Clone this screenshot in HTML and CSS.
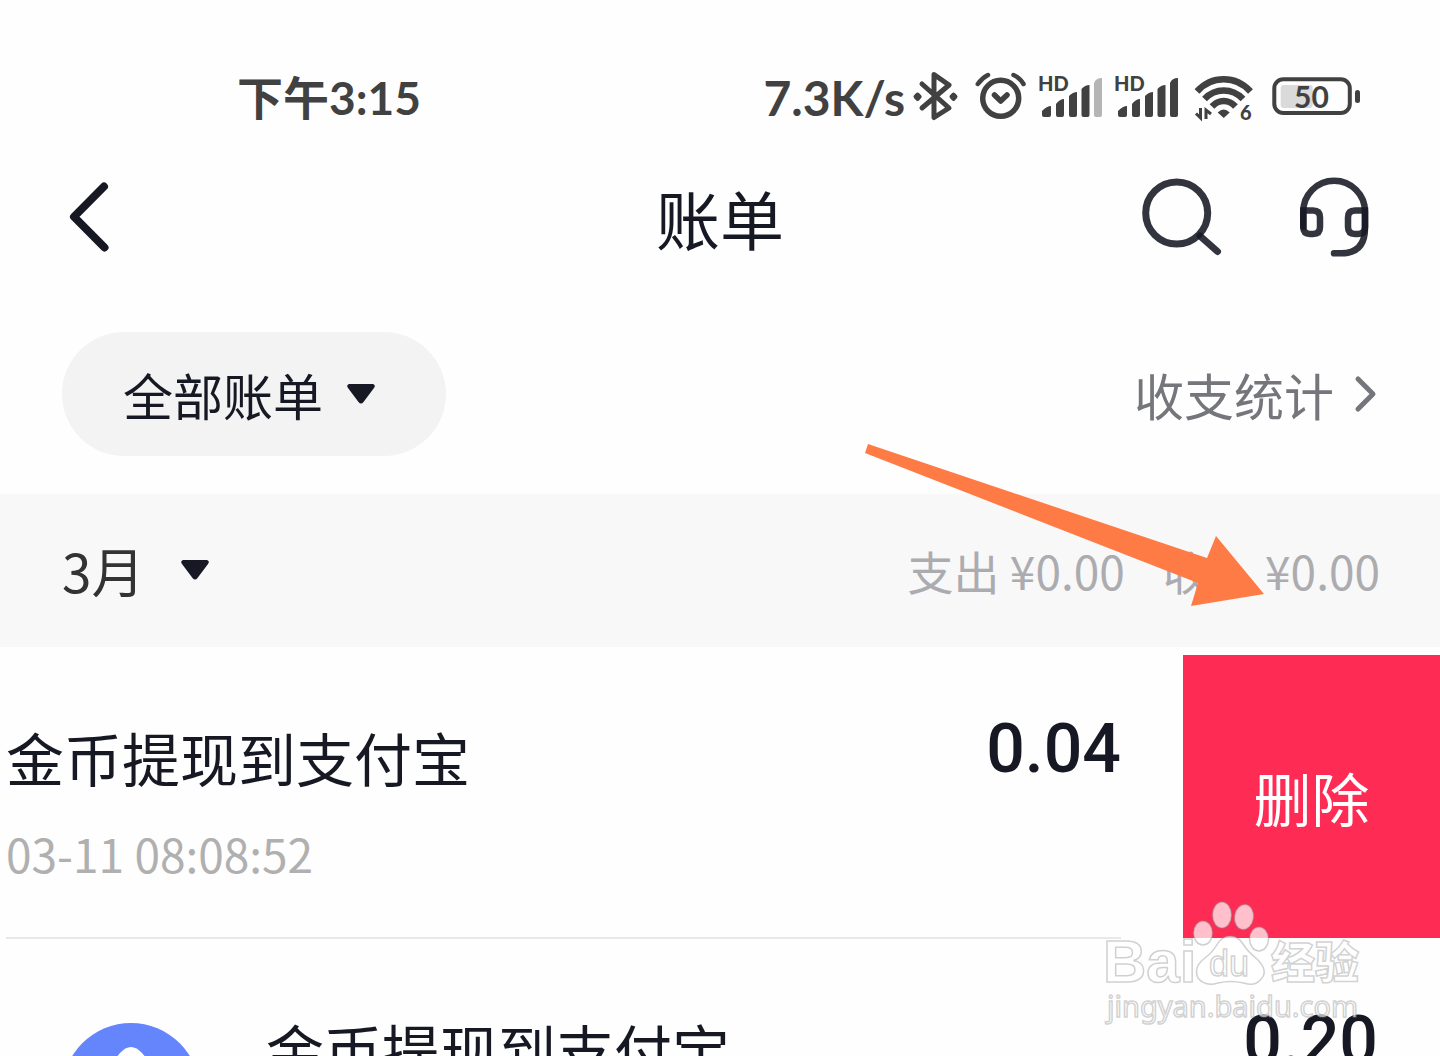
FILE: index.html
```html
<!DOCTYPE html>
<html lang="zh-CN">
<head>
    <meta charset="UTF-8">
    <meta name="viewport" content="width=device-width, initial-scale=1.0">
    <title>账单</title>
    <link rel="stylesheet" href="styles.css">
</head>
<body>
    <!-- phone status bar -->
    <div class="status-bar">
        <span class="status-time">下午3:15</span>
        <div class="status-right">
            <span class="speed">7.3K/s</span>
            <div class="status-icons">
                <svg width="49" height="48" viewBox="0 0 49 48" fill="none" stroke="#414141" stroke-width="5" stroke-linecap="round" stroke-linejoin="round">
                    <path d="M9 12L36 36L21 45.500V2.500L36 13L9 36"/>
                    <path d="M4.500 22.500L2.500 24.700L4.500 27L6.700 24.700ZM40.500 22.500L38.500 24.700L40.500 27L42.500 24.700Z" stroke-width="4" fill="#414141"/>
                </svg>
                <svg width="51" height="48" viewBox="0 0 51 48" fill="none" stroke="#414141" stroke-width="5.500" stroke-linecap="round" stroke-linejoin="round">
                    <circle cx="25.700" cy="26.300" r="18"/>
                    <path d="M19.500 23L25.700 29L32 23"/>
                    <path d="M2.800 12Q7 6 13 3M38.500 3Q45 6 48.500 12" stroke-width="4.500"/>
                </svg>
                <svg width="63" height="48" viewBox="0 0 63 48" fill="#414141">
                    <text x="-1" y="19" class="icon-text-small">HD</text>
                    <path d="M3 39Q8 34 12 34V43Q12 45 10 45H5Q3 45 3 43ZM17 32Q21 27 25 27V43Q25 45 23 45H19Q17 45 17 43ZM30 24Q34 20 38 20V43Q38 45 36 45H32Q30 45 30 43ZM42.500 17Q46 13 50.500 13V43Q50.500 45 48.500 45H44.500Q42.500 45 42.500 43Z"/>
                    <path d="M55 11Q57 6 63 6V43Q63 45 61 45H57Q55 45 55 43Z" fill="#b5b5b5"/>
                </svg>
                <svg width="67" height="48" viewBox="0 0 67 48" fill="#414141">
                    <text x="-1" y="19" class="icon-text-small">HD</text>
                    <path d="M3 39Q8 34 12 34V43Q12 45 10 45H5Q3 45 3 43ZM17 32Q21 27 25 27V43Q25 45 23 45H19Q17 45 17 43ZM30 24Q34 20 38 20V43Q38 45 36 45H32Q30 45 30 43ZM42.500 17Q46 13 50.500 13V43Q50.500 45 48.500 45H44.500Q42.500 45 42.500 43ZM55 11Q57 6 63 6V43Q63 45 61 45H57Q55 45 55 43Z"/>
                </svg>
                <svg width="64" height="48" viewBox="0 0 64 48" fill="none" stroke="#414141" stroke-width="6.500">
                    <path d="M2 19.500Q13 7.300 28.700 7.300T55.500 19.500"/>
                    <path d="M9.500 27Q17.500 18.500 28.700 18.500T48 27"/>
                    <path d="M17 34.500Q22 29 28.700 29T40.500 34.500"/>
                    <path d="M22.700 40.500Q28.700 34.500 34.700 40.500L28.700 46Z" fill="#414141" stroke="none"/>
                    <path d="M5.500 36V46L1 41.500M11 47V38L16 42" stroke-width="3"/>
                    <text x="45" y="48" class="icon-text-small" fill="#414141" stroke="none">6</text>
                </svg>
                <svg width="88" height="48" viewBox="0 0 88 48">
                    <rect x="8.700" y="13" width="32" height="23" rx="3" fill="#dadada"/>
                    <rect x="2.300" y="7.300" width="75.500" height="33.700" rx="9" fill="none" stroke="#414141" stroke-width="4"/>
                    <rect x="83" y="18" width="5" height="13" rx="2.500" fill="#414141"/>
                    <text x="22" y="36" class="icon-text" fill="#414141">50</text>
                </svg>
            </div>
        </div>
    </div>

    <header class="header">
        <button class="icon-btn" aria-label="返回">
            <svg width="44" height="80" viewBox="0 0 44 80" fill="none" stroke="#161823" stroke-width="8" stroke-linecap="round" stroke-linejoin="round">
                <path d="M36 9.500L6 39.800L36.500 70.500"/>
            </svg>
        </button>
        <h1>账单</h1>
        <div class="header-actions">
            <button class="icon-btn" aria-label="搜索">
                <svg width="80" height="80" viewBox="0 0 80 80" fill="none" stroke="#161823" stroke-opacity="0.88" stroke-width="7" stroke-linecap="round">
                    <circle cx="34.700" cy="36" r="31"/>
                    <path d="M58 59L75.500 74.500"/>
                </svg>
            </button>
            <button class="icon-btn" aria-label="客服">
                <svg width="72" height="80" viewBox="0 0 72 80" fill="none" stroke="#161823" stroke-opacity="0.88" stroke-width="6.500" stroke-linecap="round">
                    <path d="M3.300 50V34.500A30.800 30.800 0 0 1 65 34.500V51Q65 76.300 41 76.300H34"/>
                    <path d="M3.300 33.500H13Q20 33.500 20 40.500V50Q20 57 13 57H10Q3.300 57 3.300 50Z"/>
                    <path d="M65 33.500H55Q48 33.500 48 40.500V50Q48 57 55 57H58Q65 57 65 50Z"/>
                </svg>
            </button>
        </div>
    </header>

    <div class="filter-row">
        <div class="pill">
            <select class="bill-type" aria-label="账单类型">
                <option>全部账单</option>
            </select>
            <svg class="caret" width="28" height="20" viewBox="0 0 28 20"><path d="M2 0H26Q29 1 27 4L16.500 18Q14 21 11.500 18L1 4Q-1 1 2 0Z" fill="#161823"/></svg>
        </div>
        <a href="#" class="stats-link">收支统计
            <svg width="24" height="38" viewBox="0 0 24 38" fill="none" stroke="#75767b" stroke-width="5" stroke-linecap="round" stroke-linejoin="round"><path d="M4 4L19 19L4 34"/></svg>
        </a>
    </div>

    <div class="month-bar">
        <div class="month">
            <select class="month-select" aria-label="月份">
                <option>3月</option>
            </select>
            <svg class="caret" width="28" height="20" viewBox="0 0 28 20"><path d="M2 0H26Q29 1 27 4L16.500 18Q14 21 11.500 18L1 4Q-1 1 2 0Z" fill="#161823"/></svg>
        </div>
        <div class="totals">
            <span>支出 ¥0.00</span>
            <span>收入 ¥0.00</span>
        </div>
        <svg class="arrow" width="400" height="164" viewBox="0 0 400 164"><path d="M3 0L342 114L351 92L399 150L326 162L333 139L0 9Z" fill="#ff7b45"/></svg>
    </div>

    <main>
        <!-- row swiped to the left -->
        <div class="bill swiped">
            <div class="bill-body">
                <div class="bill-info">
                    <p class="bill-name">金币提现到支付宝</p>
                    <p class="bill-date">03-11 08:08:52</p>
                </div>
                <span class="amount">0.04</span>
            </div>
            <button class="delete-btn">删除</button>
        </div>
        <div class="bill">
            <svg class="bill-icon" width="138" height="138" viewBox="0 0 138 138">
                <circle cx="69" cy="69" r="69" fill="#6585fd"/>
                <path d="M58 30Q69 18 80 30L104 58V102H34V58Z" fill="#fff"/>
            </svg>
            <div class="bill-body">
                <div class="bill-info">
                    <p class="bill-name">金币提现到支付宝</p>
                </div>
                <span class="amount">0.20</span>
            </div>
        </div>
    </main>

    <svg class="watermark" width="264" height="130" viewBox="0 0 264 130">
        <g class="mark">
            <ellipse cx="23" cy="33" rx="9.500" ry="12"/>
            <ellipse cx="42" cy="15" rx="9.500" ry="13"/>
            <ellipse cx="64" cy="17" rx="9.500" ry="12.500" transform="rotate(8 64 17)"/>
            <ellipse cx="79" cy="39" rx="9.500" ry="12"/>
        </g>
        <g class="mark">
            <text x="-77" y="82" class="mark-bai">Bai</text>
            <path d="M50 36Q58 36 63 44Q68 52 77 59Q89 71 81 79Q75 87 64 83Q50 80 38 83Q25 87 18 78Q13 67 25 58Q33 52 38 43Q43 36 50 36Z"/>
            <text x="29" y="76" class="mark-du">du</text>
            <text x="91" y="79" class="mark-cn">经验</text>
            <text x="-73" y="117" class="mark-url">jingyan.baidu.com</text>
        </g>
    </svg>
</body>
</html>
```

FILE: styles.css
```css
* {
    box-sizing: border-box;
}
body {
    font-family: 'Noto Sans CJK SC', sans-serif;
    margin: 0;
    height: 100vh;
    overflow: hidden;
    position: relative;
    background-color: #fefefe;
    color: #161823;
}
svg {
    display: block;
    flex-shrink: 0;
    overflow: visible;
}
h1, p {
    margin: 0;
    font-weight: 400;
}
button, select {
    font-family: inherit;
    color: inherit;
    background: none;
    border: none;
    padding: 0;
    margin: 0;
    cursor: pointer;
}
select {
    appearance: none;
}

.status-bar {
    display: flex;
    justify-content: space-between;
    align-items: center;
    height: 148px;
    padding: 48px 80px 0 237px;
    font-family: Lato, 'Noto Sans CJK SC', sans-serif;
    font-size: 48px;
    line-height: 64px;
    font-weight: 700;
    color: #414141;
}
.status-time {
    font-size: 46px;
}
.status-right {
    display: flex;
    align-items: center;
    gap: 8px;
}
.status-icons {
    display: flex;
    align-items: center;
    gap: 13px;
    padding-bottom: 4px;
}
.icon-text {
    font-size: 30px;
}
.icon-text-small {
    font-size: 20px;
    font-weight: 900;
}

.header {
    display: grid;
    grid-template-columns: 1fr auto 1fr;
    align-items: center;
    height: 138px;
    padding: 0 68px;
}
.header h1 {
    font-size: 64px;
    line-height: 80px;
}
.icon-btn {
    justify-self: start;
}
.header-actions {
    display: flex;
    justify-content: flex-end;
    gap: 78px;
}

.filter-row {
    display: flex;
    justify-content: space-between;
    align-items: center;
    padding: 46px 62px 38px;
    font-size: 50px;
    line-height: 72px;
}
.pill {
    display: flex;
    align-items: center;
    gap: 24px;
    height: 124px;
    padding: 0 71px 0 61px;
    border-radius: 62px;
    background-color: #f3f3f3;
}
.bill-type {
    font-size: 50px;
    line-height: 72px;
}
.stats-link {
    display: flex;
    align-items: center;
    gap: 20px;
    color: #75767b;
    text-decoration: none;
}

.month-bar {
    position: relative;
    display: flex;
    justify-content: space-between;
    align-items: center;
    height: 153px;
    padding: 0 60px 2px 62px;
    background-color: #f8f8f8;
}
.month {
    display: flex;
    align-items: center;
    gap: 36px;
    color: #333;
}
.month-select {
    font-size: 53px;
    line-height: 72px;
}
.totals {
    display: flex;
    gap: 38px;
    font-size: 46px;
    line-height: 72px;
    color: #acacb0;
}
/* points at the delete button */
.arrow {
    position: absolute;
    right: 175px;
    top: -50px;
}

.bill {
    display: flex;
    padding: 8px 62px 0;
}
.bill.swiped {
    padding: 8px 0 0 6px;
}
.bill-body {
    flex: 1;
    display: flex;
    justify-content: space-between;
    align-items: flex-start;
    height: 284px;
    padding-top: 62px;
    border-bottom: 2px solid #e8e8e8;
}
.bill-name {
    font-size: 58px;
    line-height: 80px;
}
.bill-date {
    margin-top: 20px;
    font-size: 46px;
    line-height: 72px;
    color: #b0b0b0;
}
.amount {
    font-family: Roboto, sans-serif;
    font-size: 68px;
    font-weight: 500;
    line-height: 64px;
}
.delete-btn {
    width: 257px;
    height: 283px;
    margin-left: 62px;
    background-color: #fe2c55;
    color: #fff;
    font-size: 58px;
}
.bill-icon {
    margin: 76px 66px 0 0;
}

.watermark {
    position: absolute;
    right: -4px;
    bottom: 26px;
    pointer-events: none;
}
.mark {
    fill: rgba(255, 255, 255, 0.7);
    stroke: rgba(140, 140, 140, 0.4);
    stroke-width: 1.5;
}
.mark-bai {
    font-family: 'Liberation Sans', sans-serif;
    font-size: 60px;
    font-weight: 700;
}
.mark-du {
    font-family: 'Liberation Sans', sans-serif;
    font-size: 36px;
}
.mark-cn {
    font-size: 44px;
    font-weight: 900;
}
.mark-url {
    font-family: 'Noto Sans', sans-serif;
    font-size: 29px;
}
```
